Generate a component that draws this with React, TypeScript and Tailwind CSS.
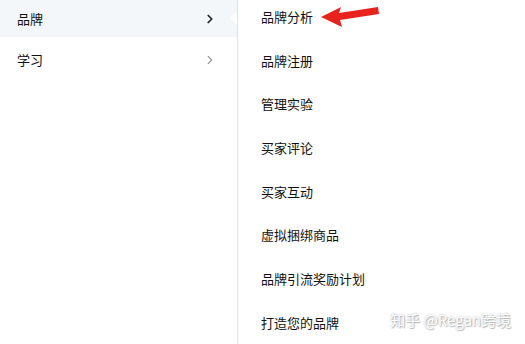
import { ChevronRight } from "lucide-react";

const cats = ["品牌", "学习"];
const subs = ["品牌分析", "品牌注册", "管理实验", "买家评论", "买家互动", "虚拟捆绑商品", "品牌引流奖励计划", "打造您的品牌"];

export default function App() {
  return (
    <div
      className="relative flex h-[344px] w-[525px] overflow-hidden bg-white text-[13px] text-[#111]"
      style={{ fontFamily: '"Noto Sans CJK SC", "Noto Sans", sans-serif' }}
    >
      <div className="w-[238px] shrink-0 border-r border-[#e3e3e3]">
        {cats.map((c, i) => (
          <div
            key={c}
            className={`relative flex items-center justify-between pl-[17px] pr-[20px] ${i === 0 ? "h-[37px] bg-[#f4f7f9]" : "h-[46px]"}`}
          >
            <span>{c}</span>
            <ChevronRight
              size={14}
              strokeWidth={i === 0 ? 3 : 2}
              className={i === 0 ? "text-[#222]" : "text-[#999]"}
            />
            {i === 0 && (
              <div className="absolute right-0 top-[11px] h-0 w-0 border-y-[7px] border-r-[7px] border-y-transparent border-r-white" />
            )}
          </div>
        ))}
      </div>
      <div className="flex flex-col pl-[23px] pt-[6px]">
        {subs.map((s) => (
          <div key={s} className="flex h-[43.7px] shrink-0 items-start pt-[1px] leading-[20px]">
            {s}
          </div>
        ))}
      </div>
      <svg className="absolute left-0 top-0" width="525" height="344" viewBox="0 0 525 344">
        <path d="M321 17 L341 7 L339 13 L378 7 L379 14 L340 20 L342 27 Z" fill="#e8231c" />
      </svg>
      <div
        className="absolute right-[14px] top-[309px] text-[15px] text-white"
        style={{ textShadow: "0 0 2px #aaa, 1px 1px 1px #bbb" }}
      >
        知乎 @Regan跨境
      </div>
    </div>
  );
}
